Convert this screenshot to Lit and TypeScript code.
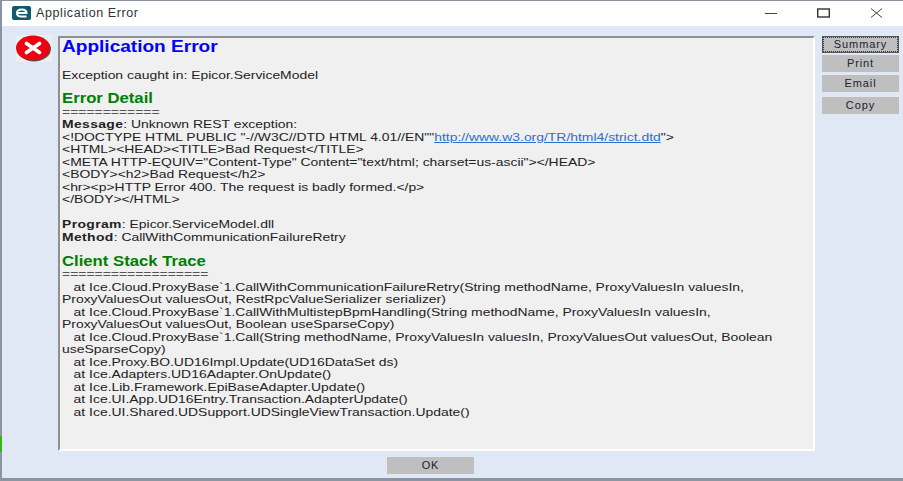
import { LitElement, html, css } from "lit";
import { customElement } from "lit/decorators.js";

const trace = [
  "\u00a0\u00a0 at Ice.Cloud.ProxyBase`1.CallWithCommunicationFailureRetry(String methodName, ProxyValuesIn valuesIn, ProxyValuesOut valuesOut, RestRpcValueSerializer serializer)",
  "\u00a0\u00a0 at Ice.Cloud.ProxyBase`1.CallWithMultistepBpmHandling(String methodName, ProxyValuesIn valuesIn, ProxyValuesOut valuesOut, Boolean useSparseCopy)",
  "\u00a0\u00a0 at Ice.Cloud.ProxyBase`1.Call(String methodName, ProxyValuesIn valuesIn, ProxyValuesOut valuesOut, Boolean useSparseCopy)",
  "\u00a0\u00a0 at Ice.Proxy.BO.UD16Impl.Update(UD16DataSet ds)",
  "\u00a0\u00a0 at Ice.Adapters.UD16Adapter.OnUpdate()",
  "\u00a0\u00a0 at Ice.Lib.Framework.EpiBaseAdapter.Update()",
  "\u00a0\u00a0 at Ice.UI.App.UD16Entry.Transaction.AdapterUpdate()",
  "\u00a0\u00a0 at Ice.UI.Shared.UDSupport.UDSingleViewTransaction.Update()",
];

@customElement("app-root")
export class AppRoot extends LitElement {
  static styles = css`
    :host {
      display: block;
      width: 903px;
      height: 481px;
      overflow: hidden;
      background:
        linear-gradient(#35b818, #35b818) 0 436px / 2px 16px no-repeat,
        #8b95a1;
      font-family: "Liberation Sans", Arial, sans-serif;
      color: #222;
    }
    .window {
      height: 477px;
      margin: 1px 0 0 2px;
      background: #dfe8f4;
      display: flex;
      flex-direction: column;
    }
    .titlebar {
      height: 25px;
      flex: none;
      box-sizing: border-box;
      background: #fff;
      display: flex;
      align-items: center;
      padding: 0 0 2px 10px;
      font-size: 12.5px;
      letter-spacing: 0.6px;
      color: #333;
    }
    .logo { width: 19px; height: 14px; margin-right: 5px; flex: none; }
    .title { flex: 1; }
    .ctl { width: 53px; height: 23px; display: flex; align-items: center; justify-content: center; flex: none; }
    .ctl svg { display: block; }
    .body {
      flex: 1;
      display: flex;
      padding: 10px 4px 0 14px;
      min-height: 0;
    }
    .icon { width: 36px; height: 27px; flex: none; margin: -1px 6px 0 0; }
    .report {
      width: 757px;
      height: 415px;
      flex: none;
      box-sizing: border-box;
      border-top: 2px solid #8f8f8f;
      border-left: 2px solid #8f8f8f;
      border-right: 2px solid #fff;
      border-bottom: 2px solid #fff;
      background: #f0f0f0;
      padding: 1px 0 0 2px;
      overflow: hidden;
    }
    .content {
      width: 607px;
      transform: scaleX(1.21);
      transform-origin: left top;
      font-size: 11.5px;
      line-height: 12.5px;
    }
    b { letter-spacing: 0.3px; }
    h1 {
      margin: 0 0 14px;
      font-size: 15.75px;
      line-height: 16px;
      font-weight: bold;
      color: #0000ff;
    }
    h2 {
      margin: 0;
      font-size: 13.8px;
      line-height: 12.5px;
      font-weight: bold;
      color: #008000;
    }
    p { margin: 0; }
    .rule { color: #555; }
    .gap { height: 12.5px; }
    .gap.short { height: 11.5px; }
    a { color: #2a6fd0; text-decoration: underline; }
    .buttons {
      width: 77px;
      flex: none;
      margin-left: 7px;
      display: flex;
      flex-direction: column;
    }
    .btn {
      height: 17px;
      margin-bottom: 2px;
      background: #bfbfbf;
      font-size: 11px;
      letter-spacing: 0.9px;
      line-height: 17px;
      text-align: center;
      color: #22222c;
      box-sizing: border-box;
    }
    .btn.focus {
      border: 1px solid #555;
      line-height: 13px;
      padding: 1px;
    }
    .btn.focus span { display: block; outline: 1px dotted #333; height: 13px; }
    .btn.print { margin-bottom: 3px; }
    .btn.email { margin-bottom: 5px; }
    .footer {
      height: 27px;
      flex: none;
      display: flex;
      padding: 6px 0 0 385px;
      box-sizing: border-box;
    }
    .ok {
      width: 87px;
      height: 17px;
      background: #bfbfbf;
      font-size: 11px;
      letter-spacing: 0.9px;
      line-height: 17px;
      text-align: center;
      color: #22222c;
    }
  `;

  render() {
    return html`
      <div class="window">
        <div class="titlebar">
          <svg class="logo" viewBox="0 0 19 14">
            <rect width="19" height="14" rx="2" fill="#0f5a6b"></rect>
            <path d="M5 7h9.500c0-2.400-2-3.600-4.800-3.600S5 4.600 5 7s2 3.600 4.700 3.600h4.800" fill="none" stroke="#fff" stroke-width="2"></path>
          </svg>
          <span class="title">Application Error</span>
          <div class="ctl"><svg width="12" height="12" viewBox="0 0 12 12"><path d="M0 6.500h12" stroke="#444" fill="none"></path></svg></div>
          <div class="ctl"><svg width="13" height="12" viewBox="0 0 13 12"><rect x="0.700" y="2" width="11.600" height="8" fill="none" stroke="#333" stroke-width="1.400"></rect></svg></div>
          <div class="ctl"><svg width="13" height="12" viewBox="0 0 13 12"><path d="M1 1.500l11 9M12 1.500l-11 9" stroke="#444" fill="none"></path></svg></div>
        </div>
        <div class="body">
          <svg class="icon" viewBox="0 0 36 27">
            <rect width="36" height="27" fill="#eceef2"></rect>
            <ellipse cx="18" cy="14" rx="17" ry="12.500" fill="#555"></ellipse>
            <ellipse cx="17" cy="13" rx="17" ry="12.500" fill="#ee0010"></ellipse>
            <path d="M10.500 8.500l13 9M23.500 8.500l-13 9" stroke="#fff" stroke-width="3.800" stroke-linecap="round"></path>
          </svg>
          <div class="report">
            <div class="content">
              <h1>Application Error</h1>
              <p>Exception caught in: Epicor.ServiceModel</p>
              <div class="gap short"></div>
              <h2>Error Detail</h2>
              <p class="rule">============</p>
              <p><b>Message</b>: Unknown REST exception:</p>
              <p>&lt;!DOCTYPE HTML PUBLIC "-//W3C//DTD HTML 4.01//EN""<a>http://www.w3.org/TR/html4/strict.dtd</a>"&gt;</p>
              <p>&lt;HTML&gt;&lt;HEAD&gt;&lt;TITLE&gt;Bad Request&lt;/TITLE&gt;</p>
              <p>&lt;META HTTP-EQUIV="Content-Type" Content="text/html; charset=us-ascii"&gt;&lt;/HEAD&gt;</p>
              <p>&lt;BODY&gt;&lt;h2&gt;Bad Request&lt;/h2&gt;</p>
              <p>&lt;hr&gt;&lt;p&gt;HTTP Error 400. The request is badly formed.&lt;/p&gt;</p>
              <p>&lt;/BODY&gt;&lt;/HTML&gt;</p>
              <div class="gap"></div>
              <p><b>Program</b>: Epicor.ServiceModel.dll</p>
              <p><b>Method</b>: CallWithCommunicationFailureRetry</p>
              <div class="gap"></div>
              <h2>Client Stack Trace</h2>
              <p class="rule">==================</p>
              ${trace.map((t) => html`<p>${t}</p>`)}
            </div>
          </div>
          <div class="buttons">
            <div class="btn focus"><span>Summary</span></div>
            <div class="btn print">Print</div>
            <div class="btn email">Email</div>
            <div class="btn">Copy</div>
          </div>
        </div>
        <div class="footer"><div class="ok">OK</div></div>
      </div>
    `;
  }
}
